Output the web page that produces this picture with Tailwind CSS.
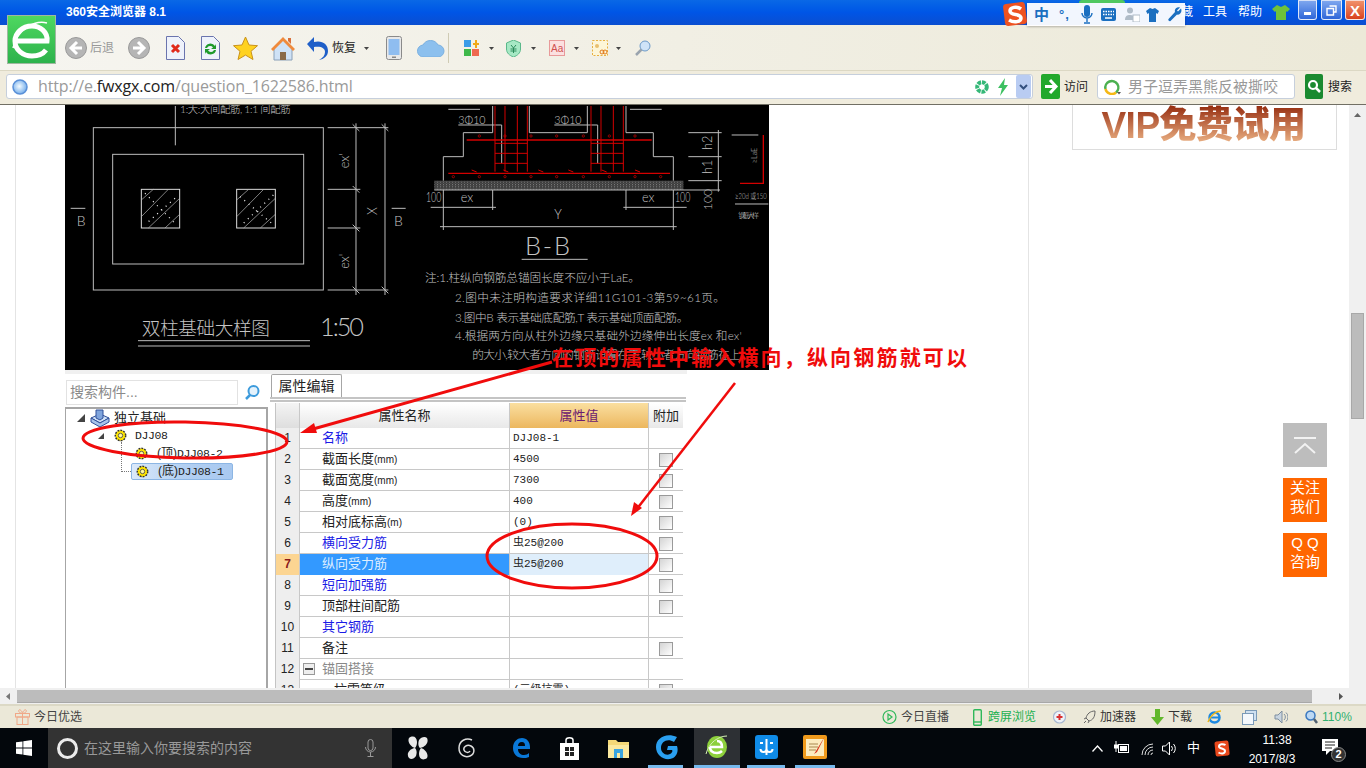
<!DOCTYPE html>
<html lang="zh">
<head>
<meta charset="UTF-8">
<title>360安全浏览器 8.1</title>
<script src="https://cdn.jsdelivr.net/npm/@tailwindcss/browser@4"></script>
</head>
<body class="bg-white">
<svg class="hidden">
  <symbol id="gear" viewBox="0 0 14 14"><circle cx="7" cy="7" r="5.6" fill="#ffe600" stroke="#333" stroke-width="1.6" stroke-dasharray="2 1.2"/><circle cx="7" cy="7" r="2.4" fill="#fff8a0" stroke="#555" stroke-width="1"/></symbol>
  <symbol id="caret" viewBox="0 0 5 3"><path d="M0 0h5L2.5 3z" fill="#444"/></symbol>
</svg>
<div class="relative w-[1366px] h-[768px] overflow-hidden flex flex-col text-[12px] text-[#222] [font-family:'Liberation_Sans','Noto_Sans_CJK_SC',sans-serif]">

  <!-- title bar -->
  <div class="h-[25px] flex-none flex items-start bg-linear-to-b from-[#0a68e6] via-[#0055e6] to-[#0a4ed0] text-white">
    <span class="ml-[66px] mt-[4px] font-bold leading-4 text-[12px]">360安全浏览器 8.1</span>
    <div class="ml-auto flex items-start">
      <span class="mt-[4px] leading-4">藏</span>
      <span class="ml-[10px] mt-[4px] leading-4">工具</span>
      <span class="ml-[11px] mt-[4px] leading-4">帮助</span>
      <svg class="ml-[10px] mt-[5px]" width="18" height="15" viewBox="0 0 18 15"><path d="M5 0l4 2 4-2 5 4-3 3-1-1v9H4V6L3 7 0 4z" fill="#6fc23a"/></svg>
      <div class="ml-[8px] w-[19px] h-[20px] rounded-b-[3px] border border-white/80 bg-linear-to-b from-[#7ea6ee] to-[#2f66d8] flex items-end justify-center pb-[4px]"><span class="w-[7px] h-[3px] bg-white"></span></div>
      <div class="ml-[4px] w-[21px] h-[20px] rounded-b-[3px] border border-white/80 bg-linear-to-b from-[#7ea6ee] to-[#2f66d8] flex items-center justify-center"><svg width="11" height="11" viewBox="0 0 11 11" fill="none" stroke="#fff" stroke-width="1.4"><path d="M3.5 1h6.500v6h-2M1 3.500h6.500v6.500H1z"/></svg></div>
      <div class="ml-[3px] mr-[1px] w-[20px] h-[20px] rounded-b-[3px] border border-white/80 bg-linear-to-b from-[#f0906a] to-[#d8401c] flex items-center justify-center text-white font-bold text-[15px] leading-none">X</div>
    </div>
  </div>

  <!-- toolbar -->
  <div class="h-[45px] flex-none flex items-center pl-[65px] pt-[1px] bg-linear-to-r from-[#f6f5f0] to-[#ece9d8]">
    <svg width="22" height="22" viewBox="0 0 22 22"><circle cx="11" cy="11" r="10.500" fill="#b5b5b5" stroke="#999"/><path d="M12 5l-6 6 6 6M6 11h11" fill="none" stroke="#fff" stroke-width="3"/></svg>
    <span class="ml-[3px] text-[#999]">后退</span>
    <svg class="ml-[14px]" width="22" height="22" viewBox="0 0 22 22"><circle cx="11" cy="11" r="10.500" fill="#b5b5b5" stroke="#999"/><path d="M10 5l6 6-6 6M16 11H5" fill="none" stroke="#fff" stroke-width="3"/></svg>
    <svg class="ml-[16px]" width="19" height="24" viewBox="0 0 19 24"><path d="M.5.500h12l6 6v17H.500z" fill="#eef2fb" stroke="#6a74ae"/><path d="M6 9l7 7M13 9l-7 7" stroke="#e02a1c" stroke-width="3"/></svg>
    <svg class="ml-[16px]" width="19" height="24" viewBox="0 0 19 24"><path d="M.5.500h12l6 6v17H.500z" fill="#eef2fb" stroke="#6a74ae"/><path d="M4 12a5.500 5.500 0 0 1 10-2l1-2v5h-5l2-1.500a3.500 3.500 0 0 0-6 .500zM15 14a5.500 5.500 0 0 1-10 2l-1 2v-5h5l-2 1.500a3.500 3.500 0 0 0 6-.500z" fill="#1f9a2c"/></svg>
    <svg class="ml-[13px]" width="25" height="24" viewBox="0 0 25 24"><path d="M12.500 1l3.500 8 8.500.700-6.500 5.600 2 8.200-7.500-4.400L5 23.500l2-8.200L.5 9.700 9 9z" fill="#ffd21f" stroke="#c9921a"/></svg>
    <svg class="ml-[13px]" width="24" height="25" viewBox="0 0 24 25"><path d="M3 12v12h18V12L12 4z" fill="#cfe2f6" stroke="#8aa0b8"/><path d="M0 13L12 1l12 12-2 2L12 5 2 15z" fill="#ef8a3c"/><path d="M9 16h6v8H9z" fill="#8a6a48"/><path d="M17 2h3v6l-3-3z" fill="#d8703a"/></svg>
    <svg class="ml-[12px]" width="22" height="24" viewBox="0 0 22 24"><path d="M7 1v5c8-2 14 2 14 9 0 5-4 8-9 9 4-2 6-5 6-8 0-4-4-6-11-5v5L0 8z" fill="#1f5fc8"/></svg>
    <span class="ml-[3px]">恢复</span>
    <svg class="ml-[8px]" width="5" height="3"><use href="#caret"/></svg>
    <svg class="ml-[17px]" width="16" height="24" viewBox="0 0 16 24"><rect x=".5" y=".5" width="15" height="23" rx="2" fill="#e8e8e8" stroke="#8a8a8a"/><rect x="2.500" y="3" width="11" height="16" fill="#8fbdf0"/><rect x="6" y="20.500" width="4" height="1.500" fill="#888"/></svg>
    <svg class="ml-[15px]" width="28" height="18" viewBox="0 0 28 18"><path d="M7 18a6 6 0 0 1-1-12A8.500 8.500 0 0 1 21 6a6 6 0 0 1 0 12z" fill="#8cc0ee" stroke="#7ab0e0"/></svg>
    <span class="ml-[3px] w-px h-[30px] bg-[#cfcbb4]"></span>
    <svg class="ml-[15px]" width="15" height="16" viewBox="0 0 15 16"><rect width="7" height="7" fill="#3a9ce8"/><path d="M9 3h2V0h2v3h2v2h-2v3h-2V5H9z" fill="#f0a818"/><rect y="9" width="7" height="7" fill="#3fb84a"/><rect x="8" y="9" width="7" height="7" fill="#ef6a50"/></svg>
    <svg class="ml-[10px]" width="5" height="3"><use href="#caret"/></svg>
    <svg class="ml-[12px]" width="15" height="17" viewBox="0 0 15 17"><path d="M7.500 0l7 3v6c0 4-3 6.500-7 8-4-1.500-7-4-7-8V3z" fill="#a6e8c4" stroke="#5ab88a"/><path d="M5 5l2.500 3L10 5M4.500 9h6M4.500 11h6M7.500 8v5" fill="none" stroke="#2a8a5a"/></svg>
    <svg class="ml-[10px]" width="5" height="3"><use href="#caret"/></svg>
    <svg class="ml-[13px]" width="16" height="16" viewBox="0 0 16 16"><rect x=".5" y=".5" width="15" height="15" fill="#fbe0e0" stroke="#e89a9a"/><text x="2" y="12" font-size="10" fill="#d05050">Aa</text></svg>
    <svg class="ml-[9px]" width="5" height="3"><use href="#caret"/></svg>
    <svg class="ml-[13px]" width="16" height="16" viewBox="0 0 16 16"><rect x=".5" y=".5" width="15" height="15" fill="#fdf6d8" stroke="#e8b040" stroke-dasharray="2 1.500"/><circle cx="5" cy="6" r="2" fill="#e8c070"/><circle cx="10" cy="12" r="2" fill="none" stroke="#e07818"/><circle cx="13" cy="12" r="2" fill="none" stroke="#e07818"/></svg>
    <svg class="ml-[8px]" width="5" height="3"><use href="#caret"/></svg>
    <svg class="ml-[14px]" width="16" height="17" viewBox="0 0 16 17"><circle cx="10" cy="6" r="5" fill="#cfe4f8" stroke="#6c9ac8"/><path d="M6.500 9.500L1 15" stroke="#9aa4ae" stroke-width="2.500"/></svg>
  </div>

  <!-- address bar -->
  <div class="h-[34px] flex-none flex items-start pl-[6px] pt-[4px] bg-[#f0ecdd] border-t border-[#dcd8c4]">
    <div class="w-[1027px] h-[25px] -mt-px flex items-center bg-white border border-[#c6cfdc] rounded-[3px]">
      <svg class="ml-[5px]" width="16" height="16" viewBox="0 0 16 16"><defs><radialGradient id="globe" cx=".45" cy=".45" r=".6"><stop offset="0" stop-color="#f4fbff"/><stop offset="1" stop-color="#6aa8ea"/></radialGradient></defs><circle cx="8" cy="8" r="7" fill="url(#globe)" stroke="#5a90d8" stroke-width="1.500"/></svg>
      <span class="ml-[10px] -mt-[2px] text-[16px] leading-5 text-[#9a9a9a] [font-family:'Open_Sans',sans-serif] tracking-[-0.15px] whitespace-nowrap">http://e.<span class="text-[#222]">fwxgx.com</span>/question_1622586.html</span>
      <svg class="ml-auto" width="14" height="14" viewBox="0 0 14 14"><circle cx="7" cy="7" r="4.800" fill="none" stroke="#35b878" stroke-width="4" stroke-dasharray="3.500 .9"/></svg>
      <svg class="ml-[8px]" width="12" height="18" viewBox="0 0 12 18"><path d="M8 0L1 10h4l-2 8 8-11H7z" fill="#3cc060"/></svg>
      <div class="ml-[7px] mr-px w-[15px] h-[23px] bg-[#b9ccf2] rounded-[2px] flex items-center justify-center"><svg width="9" height="6" viewBox="0 0 9 6" fill="none" stroke="#33507e" stroke-width="2"><path d="M1 1l3.500 3.500L8 1"/></svg></div>
    </div>
    <svg class="ml-[8px] -mt-[1px]" width="19" height="25" viewBox="0 0 19 25"><rect width="19" height="25" rx="2" fill="#22a82c"/><path d="M4 12.500h9M9 6l6 6.500-6 6.500" fill="none" stroke="#fff" stroke-width="3"/></svg>
    <span class="ml-[4px] mt-[4px] leading-4">访问</span>
    <div class="ml-[9px] w-[198px] h-[25px] -mt-px flex items-center bg-white border border-[#c6cfdc] rounded-[3px]">
      <svg class="ml-[5px]" width="18" height="16" viewBox="0 0 18 16"><path d="M13 13.500A6.500 6.500 0 1 0 2.500 10" fill="none" stroke="#4cb050" stroke-width="2.500"/><path d="M2.500 10A6.500 6.500 0 0 0 13 13.500" fill="none" stroke="#f5b816" stroke-width="2.500"/><path d="M14 13h4l-2 2.500z" fill="#555"/></svg>
      <span class="ml-[7px] text-[15px] leading-5 text-[#999] whitespace-nowrap">男子逗弄黑熊反被撕咬</span>
    </div>
    <svg class="ml-[10px] -mt-[1px]" width="18" height="25" viewBox="0 0 18 25"><rect width="18" height="25" rx="2" fill="#1a8a30"/><circle cx="8" cy="11" r="4" fill="none" stroke="#fff" stroke-width="2.200"/><path d="M11 14l4 4" stroke="#fff" stroke-width="2.500"/></svg>
    <span class="ml-[5px] mt-[4px] leading-4">搜索</span>
  </div>
  <div class="h-px flex-none bg-[#716f64]"></div>

  <!-- page -->
  <div class="h-[583px] flex-none flex overflow-hidden">
    <div class="w-[1349px] flex-none flex overflow-hidden">
      <div class="ml-[15px] w-[1014px] flex-none border-x border-[#e4e4e4] pl-[49px] overflow-hidden">
        <!-- pasted drawing -->
        <svg class="block" width="704" height="265" viewBox="65 105 704 265" font-family="Lato, Noto Sans CJK SC, sans-serif">
          <defs>
            <pattern id="speck" width="9" height="7" patternUnits="userSpaceOnUse"><rect width="9" height="7" fill="#3c3c3c"/><circle cx="2" cy="2" r="1.200" fill="#d4d4d4"/><circle cx="6" cy="5" r="1" fill="#a8a8a8"/></pattern>
          </defs>
          <rect x="65" y="105" width="704" height="265" fill="#000"/>
          <g transform="translate(60 100) scale(.33333)" fill="none" stroke="#bdbdbd" stroke-width="3">
            <path d="M346 18v118"/>
            <rect x="100" y="83" width="690" height="487"/>
            <rect x="158" y="163" width="573" height="329"/>
            <rect x="244" y="268" width="115" height="116" stroke="#ddd"/>
            <rect x="530" y="268" width="116" height="116" stroke="#ddd"/>
            <path stroke-width="2" d="M244 300l36-32M244 350l81-82M265 384l94-89M315 384l44-41M530 300l36-32M530 350l81-82M551 384l95-89M601 384l45-41"/>
            <path stroke-dasharray="3 14" stroke-width="4" stroke="#eee" d="M255 280l90 90M345 295l-80 70M540 290l95 80M640 285l-90 85"/>
            <path d="M803 83h182M803 268h98M803 384h98M803 570h182M888 70v515M975 70v515M878 73l20 20M965 73l20 20M878 258l20 20M878 374l20 20M878 560l20 20M965 560l20 20M32 325h44M995 325h42"/>
            <path d="M234 722h516M234 738h516"/>
            <g stroke="none" fill="#c4c4c4" font-weight="300">
              <text x="360" y="38" font-size="31" textLength="332">1:大:大间配筋, 1:1 间配筋</text>
              <text x="50" y="377" font-size="42">B</text>
              <text x="1002" y="377" font-size="42">B</text>
              <text transform="translate(868 205) rotate(-90)" font-size="38">ex'</text>
              <text transform="translate(868 506) rotate(-90)" font-size="38">ex'</text>
              <text transform="translate(952 345) rotate(-90)" font-size="38">X</text>
              <text x="245" y="706" font-size="56" textLength="385">双柱基础大样图</text>
              <text x="780" y="708" font-size="76" textLength="132">1:50</text>
            </g>
          </g>
          <g transform="translate(410 100) scale(.33333)" fill="none" stroke="#bdbdbd" stroke-width="3">
            <rect x="73" y="242" width="747" height="28" fill="url(#speck)" stroke="none"/>
            <path d="M73 270h857M100 242v-72h60V98h88V18M358 18v80h174V18M648 18v80h82v72h60v72M115 28h95M660 28h95M145 75h130v115M433 75h130v115"/>
            <path d="M62 322h196M100 270v60M248 270v60M640 322h190M648 270v60M790 270v60M90 380h710M100 330v60M790 330v60M925 90v185M835 98h100M835 170h100M835 242h100M965 105h80M975 312h100M335 478h198"/>
            <g stroke="#d40000">
              <path d="M255 18v197M285 18v197M322 18v197M352 18v197M543 18v197M573 18v197M610 18v197M640 18v197M255 130h97M255 160h97M255 190h97M543 130h97M543 160h97M543 190h97"/>
              <path stroke-width="4" d="M170 120h555M115 220h665M1060 105v145h-70"/>
              <path d="M185 210l15 6M280 210l15 6M385 210l15 6M475 210l15 6M575 210l15 6M675 210l15 6"/>
              <g stroke-width="2">
                <circle cx="208" cy="108" r="3.500"/><circle cx="285" cy="108" r="3.500"/><circle cx="363" cy="108" r="3.500"/><circle cx="440" cy="108" r="3.500"/><circle cx="520" cy="108" r="3.500"/><circle cx="598" cy="108" r="3.500"/><circle cx="675" cy="108" r="3.500"/>
                <circle cx="130" cy="230" r="3.500"/><circle cx="208" cy="230" r="3.500"/><circle cx="285" cy="230" r="3.500"/><circle cx="363" cy="230" r="3.500"/><circle cx="440" cy="230" r="3.500"/><circle cx="520" cy="230" r="3.500"/><circle cx="598" cy="230" r="3.500"/><circle cx="675" cy="230" r="3.500"/><circle cx="752" cy="230" r="3.500"/>
              </g>
            </g>
            <g stroke="none" fill="#c4c4c4" font-weight="300">
              <text x="145" y="72" font-size="32">3Φ10</text>
              <text x="433" y="72" font-size="32">3Φ10</text>
              <text x="48" y="305" font-size="38" textLength="46" lengthAdjust="spacingAndGlyphs">100</text>
              <text x="795" y="305" font-size="38" textLength="46" lengthAdjust="spacingAndGlyphs">100</text>
              <text x="152" y="305" font-size="38">ex</text>
              <text x="696" y="305" font-size="38">ex</text>
              <text x="433" y="358" font-size="38">Y</text>
              <text transform="translate(907 150) rotate(-90)" font-size="38">h2</text>
              <text transform="translate(907 222) rotate(-90)" font-size="38">h1</text>
              <text transform="translate(907 330) rotate(-90)" font-size="36">100</text>
              <text transform="translate(1040 190) rotate(-90)" font-size="22">≥LaE</text>
              <text x="975" y="296" font-size="24" textLength="95" lengthAdjust="spacingAndGlyphs">≥20d 或150</text>
              <text x="985" y="354" font-size="22" textLength="62">钢筋大样</text>
              <text x="345" y="466" font-size="76" textLength="135">B-B</text>
              <text x="45" y="545" font-size="35" textLength="645">注:1.柱纵向钢筋总锚固长度不应小于LaE。</text>
              <text x="135" y="605" font-size="35" textLength="810">2.图中未注明构造要求详细11G101-3第59~61页。</text>
              <text x="135" y="665" font-size="35" textLength="700">3.图中B 表示基础底配筋,T 表示基础顶面配筋。</text>
              <text x="135" y="720" font-size="35" textLength="860">4.根据两方向从柱外边缘只基础外边缘伸出长度ex 和ex'</text>
              <text x="187" y="778" font-size="35" textLength="805">的大小,较大者方向的钢筋设置在下,较小者方向钢筋在上</text>
            </g>
          </g>
        </svg>
        <!-- pasted software panel -->
        <div class="w-[622px] h-[318px] flex flex-col bg-white">
          <div class="h-[4px] flex-none bg-[#f0f0f0]"></div>
          <div class="flex flex-1 min-h-0">
            <div class="w-[202px] flex-none flex flex-col">
              <div class="h-[33px] flex-none flex items-start pt-[6px] pl-px">
                <div class="w-[172px] h-[25px] border border-[#e2e2e2] flex items-center pl-[3px] text-[14px] text-[#8a8a8a]">搜索构件...</div>
                <svg class="ml-[7px] mt-[5px]" width="15" height="15" viewBox="0 0 15 15"><circle cx="8.500" cy="6" r="5" fill="#e4f2fc" stroke="#3d9bdc" stroke-width="2"/><path d="M5 10l-4 4" stroke="#3d9bdc" stroke-width="2.500"/></svg>
              </div>
              <div class="relative flex-1 border-t-2 border-r-2 border-l border-[#a6a6a6] -mr-px pl-[11px] text-[12px]">
                <div class="flex items-center h-[18px]">
                  <svg width="8" height="8" viewBox="0 0 8 8"><path d="M8 0v8H0z" fill="#444"/></svg>
                  <svg class="ml-[5px]" width="20" height="20" viewBox="0 0 20 20"><path d="M1 10l9-4 9 4-9 5z" fill="#cfe0f6" stroke="#30509a"/><path d="M1 10v4l9 5 9-5v-4l-9 5z" fill="#a8c4ea" stroke="#30509a"/><path d="M6 2h7v8l-3 2-4-2z" fill="#7fa4dc" stroke="#30509a"/></svg>
                  <span class="ml-[4px] text-[13px] leading-4">独立基础</span>
                </div>
                <div class="flex items-center h-[17px] pl-[21px]">
                  <svg width="6" height="6" viewBox="0 0 8 8"><path d="M8 0v8H0z" fill="#444"/></svg>
                  <svg class="ml-[10px]" width="13" height="13"><use href="#gear"/></svg>
                  <span class="ml-[8px] leading-4 [font-family:'Liberation_Mono',monospace] text-[11.500px] -tracking-[0.4px]">DJJ08</span>
                </div>
                <div class="flex items-center h-[17px] mt-px pl-[58px]">
                  <svg width="13" height="13"><use href="#gear"/></svg>
                  <span class="ml-[9px] leading-4 whitespace-nowrap text-[12px]">(顶)<span class="[font-family:'Liberation_Mono',monospace] text-[11.500px] -tracking-[0.4px]">DJJ08-2</span></span>
                </div>
                <div class="flex items-center h-[17px] mt-px ml-[54px] w-[102px] pl-[4px] rounded-[2px] border border-[#8cb6e4] bg-linear-to-r from-[#dbe9fa] via-[#b3d0f2] to-[#a9c9f0]">
                  <svg width="13" height="13"><use href="#gear"/></svg>
                  <span class="ml-[9px] leading-4 whitespace-nowrap text-[12px]">(底)<span class="[font-family:'Liberation_Mono',monospace] text-[11.500px] -tracking-[0.4px]">DJJ08-1</span></span>
                </div>
                <span class="absolute left-[55px] top-[33px] w-[11px] h-[12px] border-l border-b border-dotted border-[#777]"></span>
                <span class="absolute left-[55px] top-[45px] w-[10px] h-[18px] border-l border-b border-dotted border-[#777]"></span>
              </div>
            </div>
            <div class="ml-[3px] w-[416px] flex-none flex flex-col">
              <div class="ml-[1px] w-[71px] h-[23px] flex-none flex items-center justify-center border border-b-0 border-[#a6a6a6] text-[14px] rounded-t-[2px]">属性编辑</div>
              <div class="h-[5px] flex-none border-t-2 border-b-2 border-[#c4c4c4] bg-white"></div>
              <div id="grid" class="ml-[5px] mt-px w-[408px] flex-1 overflow-hidden border-l border-[#c4c4c4]"></div>
            </div>
          </div>
        </div>
      </div>
      <!-- side column -->
      <div class="ml-[43px] w-[265px] h-[45px] flex-none border-x border-b border-[#dddddd] flex justify-center items-start">
        <span class="-mt-[2px] ml-[-2px] text-[37px] leading-[45px] font-black tracking-[-0.5px] whitespace-nowrap bg-linear-to-b from-[#8f2000] to-[#f4c293] bg-clip-text text-transparent">VIP免费试用</span>
      </div>
    </div>
    <!-- vertical scrollbar -->
    <div class="relative w-[17px] flex-none bg-[#f0f0f0]">
      <svg class="absolute left-[5px] top-[8px]" width="7" height="4" viewBox="0 0 7 4"><path d="M0 4l3.500-4L7 4z" fill="#666"/></svg>
      <div class="absolute left-[2px] top-[208px] w-[13px] h-[106px] bg-[#bcbcbc] border border-[#a8a8a8]"></div>
    </div>
  </div>

  <!-- horizontal scrollbar -->
  <div class="h-[16px] flex-none flex items-center bg-[#f0f0f0] pr-[17px]">
    <svg class="ml-[6px]" width="4" height="7" viewBox="0 0 4 7"><path d="M4 0v7L0 3.500z" fill="#777"/></svg>
    <div class="ml-[7px] w-[1295px] h-[13px] bg-[#bcbcbc] border-b border-[#a8a8a8]"></div>
    <svg class="ml-[27px]" width="4" height="7" viewBox="0 0 4 7"><path d="M0 0v7l4-3.500z" fill="#555"/></svg>
  </div>

  <!-- status bar -->
  <div class="h-[24px] flex-none flex items-center bg-[#ebe8d8] border-t-2 border-[#dcd9c6] text-[12px] leading-4">
    <svg class="ml-[15px]" width="15" height="16" viewBox="0 0 15 16" fill="none" stroke="#f0a888"><rect x=".5" y="4.500" width="14" height="3.500"/><rect x="2" y="8" width="11" height="7.500"/><path d="M7.500 4.500v11M7.500 4.500C4 4 3 2 4 1s3 1 3.500 3.500C8 2 10 0 11 1s0 3-3.500 3.500"/></svg>
    <span class="ml-[4px] text-[#444]">今日优选</span>
    <svg class="ml-[800px]" width="15" height="16" viewBox="0 0 15 16" fill="none" stroke="#2fb85a" stroke-width="1.200"><circle cx="7.500" cy="8" r="6.500"/><path d="M6 5l4 3-4 3z"/></svg>
    <span class="ml-[4px] text-[#444]">今日直播</span>
    <svg class="ml-[24px]" width="9" height="17" viewBox="0 0 9 17" fill="none" stroke="#2fb85a" stroke-width="1.400"><rect x=".7" y=".7" width="7.600" height="15.600" rx="1"/><path d="M1 13h7"/></svg>
    <span class="ml-[6px] text-[#20b050]">跨屏浏览</span>
    <svg class="ml-[17px]" width="13" height="16" viewBox="0 0 13 16"><circle cx="6.500" cy="8" r="6" fill="#eef2f8" stroke="#a8b8d0" stroke-width="1.200"/><path d="M5.500 5h2v2h2v2h-2v2h-2V9h-2V7h2z" fill="#d83030"/></svg>
    <svg class="ml-[17px]" width="13" height="14" viewBox="0 0 13 14" fill="none" stroke="#666"><path d="M12 1C7 1 4 4 3 8l3 3c4-1 6-4 6-10zM3 8l-2 1M6 11l-1 2M3 11l-2 2"/></svg>
    <span class="ml-[4px] text-[#333]">加速器</span>
    <svg class="ml-[15px]" width="13" height="16" viewBox="0 0 13 16"><path d="M4 0h5v8h4l-6.500 8L0 8h4z" fill="#62b82c"/></svg>
    <span class="ml-[4px] text-[#333]">下载</span>
    <svg class="ml-[15px]" width="15" height="15" viewBox="0 0 15 15"><circle cx="7.500" cy="7.500" r="5" fill="none" stroke="#1c88e0" stroke-width="2.500"/><path d="M3 7.500h10" stroke="#1c88e0" stroke-width="2"/><path d="M1 12C3 6 9 1 14 1" fill="none" stroke="#f0b818" stroke-width="1.500"/></svg>
    <svg class="ml-[20px]" width="15" height="15" viewBox="0 0 15 15"><rect x="3.500" y=".5" width="11" height="10" fill="#cfe0f0" stroke="#7a9ab8"/><rect x=".5" y="3.500" width="11" height="11" fill="#f4f8fc" stroke="#7a9ab8"/></svg>
    <svg class="ml-[17px]" width="14" height="14" viewBox="0 0 14 14"><path d="M1 5h3l4-4v12l-4-4H1z" fill="#c8d4e0" stroke="#7f8fa0"/><path d="M10 4a4 4 0 0 1 0 6M12 2.500a6 6 0 0 1 0 9" fill="none" stroke="#7f8fa0"/></svg>
    <svg class="ml-[17px]" width="13" height="14" viewBox="0 0 13 14"><circle cx="5.500" cy="5.500" r="4.500" fill="#bcd8f4" stroke="#3a78c0" stroke-width="1.500"/><path d="M9 9l3 4" stroke="#506070" stroke-width="2.500"/></svg>
    <span class="ml-[4px] text-[#30b070]">110%</span>
  </div>

  <!-- taskbar -->
  <div class="h-[40px] flex-none flex bg-[#03070c] text-white">
    <div class="w-[48px] flex-none flex items-center justify-center">
      <svg width="16" height="16" viewBox="0 0 16 16" fill="#fff"><path d="M0 2.300l6.500-.9v6.200H0zM7.300 1.300L16 0v7.600H7.300zM0 8.400h6.500v6.200L0 13.700zM7.300 8.400H16V16l-8.700-1.200z"/></svg>
    </div>
    <div class="w-[344px] flex-none flex items-center bg-[#333333]">
      <span class="ml-[9px] size-[21px] rounded-full border-[3px] border-white/90"></span>
      <span class="ml-[6px] text-[14px] leading-5 text-[#999]">在这里输入你要搜索的内容</span>
      <svg class="ml-[113px]" width="11" height="18" viewBox="0 0 11 18" fill="none" stroke="#999"><rect x="3" y=".5" width="5" height="11" rx="2.500"/><path d="M.5 8a5 5 0 0 0 10 0M5.500 13v4M2.500 17.500h6"/></svg>
    </div>
    <div class="ml-[15px] flex items-center">
      <svg width="22" height="24" viewBox="0 0 22 24" fill="#e8e8e8"><path d="M2 2c4-3 8-1 8 4 0 3-1 5-2 6-4-1-8-6-6-10zM20 2c2 4-1 9-7 10-2-2-2-5-1-8 2-3 6-4 8-2zM2 22c-3-4 0-9 6-10 2 2 2 5 1 8-2 3-5 4-7 2zM20 22c-4 3-8 1-8-4 0-3 1-5 2-6 4 1 8 6 6 10z"/></svg>
      <svg class="ml-[28px]" width="19" height="22" viewBox="0 0 19 22" fill="none" stroke="#ddd" stroke-width="1.500"><path d="M15 3C9 0 2 4 2 11s6 10 11 8 5-8 1-10-8 1-7 4 5 3 6 1"/></svg>
      <svg class="ml-[36px]" width="19" height="22" viewBox="0 0 19 22"><path d="M1 11C1 4 6 1 10 1c5 0 8 4 8 9v2H6c0 4 3 6 6 6 2 0 4-1 5-2v4c-2 1-4 1-6 1-6 0-10-4-10-10zm5-2h7c0-3-1-4-3-4-3 0-4 2-4 4z" fill="#0a78d8"/></svg>
      <svg class="ml-[29px]" width="19" height="23" viewBox="0 0 19 23"><path d="M0 6h19v17H0z" fill="#fff"/><path d="M6 6V3c0-3 7-3 7 0v3" fill="none" stroke="#fff" stroke-width="1.500"/><path d="M5 10h4v4H5zM10 10h4v4h-4zM5 15h4v4H5zM10 15h4v4h-4z" fill="#222"/></svg>
      <svg class="ml-[29px]" width="21" height="20" viewBox="0 0 21 20"><path d="M0 2h8l2 2h11v16H0z" fill="#f4d878"/><path d="M0 7h21v13H0z" fill="#fbe9a0"/><path d="M6 11h9v9H6z" fill="#3aa4e0"/><path d="M9 15h3v5H9z" fill="#fbe9a0"/></svg>
      <div class="ml-[19px] w-[35px] h-[40px] flex items-center justify-center border-b-[3px] border-[#76b9ed]">
        <svg width="24" height="26" viewBox="0 0 24 26"><path d="M23 3l-3 5C14 4 7 7 7 14c0 5 5 8 9 6 2-1 3-3 2-4h-5l1-4h9c2 6-1 12-7 13C9 26 2 21 2 13 2 4 12-2 23 3z" fill="#2a9ff0"/></svg>
      </div>
      <div class="ml-[11px] w-[46px] h-[40px] flex items-center justify-center bg-[#2d3034] border-b-[3px] border-[#76b9ed]">
        <svg width="24" height="26" viewBox="0 0 24 26"><ellipse cx="12" cy="13" rx="10" ry="11" fill="#8dd03c"/><path d="M5 13h12c0-4-2-6-5-6M5 13c0 4 3 6 7 6 2 0 4-1 5-2" fill="none" stroke="#fff" stroke-width="2.500"/><path d="M1 20C4 8 14 2 22 2" fill="none" stroke="#d8f0b8"/></svg>
      </div>
      <div class="ml-[7px] w-[38px] h-[40px] flex items-center justify-center border-b-[3px] border-[#76b9ed]">
        <svg width="23" height="24" viewBox="0 0 23 24"><rect width="23" height="24" rx="3" fill="#0f8be8"/><path d="M11.500 4v10a3 3 0 0 0 6 0M11.500 14a3 3 0 0 1-6 0M8 8H5M15 8h3M11.500 14v6" fill="none" stroke="#fff" stroke-width="2"/></svg>
      </div>
      <div class="ml-[10px] w-[40px] h-[40px] flex items-center justify-center border-b-[3px] border-[#76b9ed]">
        <svg width="24" height="24" viewBox="0 0 24 24"><rect width="24" height="24" rx="2" fill="#f09a1c"/><rect x="3" y="4" width="18" height="17" fill="#fcecc0"/><path d="M6 9h9M6 12h9M6 15h7" stroke="#a88850"/><path d="M22 1L13 16l-2 3 3-2z" fill="#d83018"/></svg>
      </div>
    </div>
    <svg class="ml-[257px] mt-[17px]" width="11" height="7" viewBox="0 0 11 7" fill="none" stroke="#fff" stroke-width="1.300"><path d="M.5 6.500l5-5.500 5 5.500"/></svg>
    <svg class="ml-[11px] mt-[13px]" width="15" height="14" viewBox="0 0 15 14"><rect x="4.500" y="3.500" width="10" height="8" fill="none" stroke="#fff"/><rect x="6" y="5" width="7" height="5" fill="#fff"/><path d="M2 0v4M0 4h4v3H0zM2 7v4" stroke="#fff" fill="#fff"/></svg>
    <svg class="ml-[12px] mt-[14px]" width="13" height="14" viewBox="0 0 13 14" fill="none" stroke="#ddd"><path d="M1 13a11 11 0 0 1 11-11M4 13a8 8 0 0 1 8-8M7 13a5 5 0 0 1 5-5M10 13a2 2 0 0 1 2-2"/></svg>
    <svg class="ml-[8px] mt-[13px]" width="14" height="15" viewBox="0 0 14 15" fill="none" stroke="#fff"><path d="M.5 5h3l4-4v13l-4-4h-3z"/><path d="M9.500 5a4 4 0 0 1 0 5M11.500 3a6.500 6.500 0 0 1 0 9"/></svg>
    <span class="ml-[11px] mt-[12px] text-[13px] leading-4">中</span>
    <svg class="ml-[14px] mt-[12px]" width="16" height="17" viewBox="0 0 16 17"><rect x="1" y="1" width="14" height="15" rx="2" transform="rotate(-6 8 8)" fill="#e8481c"/><path d="M11.500 5C9 3.500 5 4 5 6.500S11 8 11 11s-4 3-6.500 1.500" fill="none" stroke="#fff" stroke-width="2"/></svg>
    <div class="ml-[20px] w-[52px] flex flex-col items-center pt-[3px] text-[12px] leading-[19px] whitespace-nowrap -translate-x-[4px]"><span class="ml-[10px]">11:38</span><span>2017/8/3</span></div>
    <div class="relative ml-[20px] mt-[11px]">
      <svg width="16" height="17" viewBox="0 0 16 17"><path d="M0 0h16v12h-8l-4 4v-4H0z" fill="#fff"/><path d="M3 3h10M3 6h10M3 9h7" stroke="#222"/></svg>
      <span class="absolute left-[9px] top-[8px] size-[15px] rounded-full bg-[#333] border border-[#888] flex items-center justify-center text-[11px] font-bold leading-none">2</span>
    </div>
  </div>

  <!-- logo over title bar and toolbar -->
  <div class="absolute left-[7px] top-[15px] w-[49px] h-[49px] flex items-center justify-center bg-linear-to-b from-[#4ed860] to-[#2cb24c] border border-[#9fb8a0]">
    <svg width="42" height="40" viewBox="0 0 42 40" fill="none" stroke="#fff"><path d="M5 21h31c1-9-7-15-15-15-10 0-17 7-17 15 0 9 8 15 17 15 6 0 11-2 14-6" stroke-width="5"/><path d="M36 3C24 0 6 9 2 28" stroke-width="1.500"/></svg>
  </div>

  <!-- input method bar over window buttons -->
  <div class="absolute left-[1027px] top-[3px] w-[158px] h-[23px] flex items-center bg-white/95 shadow-[0_1px_2px_rgba(0,0,0,0.25)] text-[#1b6fc0]">
    <span class="ml-[7px] text-[15px] font-bold leading-4">中</span>
    <span class="ml-[10px] text-[13px] font-bold leading-4 tracking-[1px] whitespace-nowrap">°,</span>
    <svg class="ml-[11px]" width="12" height="19" viewBox="0 0 12 19"><rect x="3" y="0" width="6" height="12" rx="3" fill="#1b6fc0"/><path d="M1 8a5 5 0 0 0 10 0M6 13v4M3 18h6" fill="none" stroke="#1b6fc0" stroke-width="1.400"/></svg>
    <svg class="ml-[8px]" width="15" height="13" viewBox="0 0 15 13"><rect width="15" height="13" rx="2" fill="#1b6fc0"/><path d="M2 3.500h11M2 6.500h11" stroke="#fff" stroke-width="1.500" stroke-dasharray="1.500 1"/><path d="M4 10h7" stroke="#fff" stroke-width="1.500"/></svg>
    <svg class="ml-[9px]" width="15" height="15" viewBox="0 0 15 15"><circle cx="5" cy="3.500" r="3" fill="#b0bcc8"/><path d="M0 13c0-4 2-5 5-5s4 1 4 2v3z" fill="#b0bcc8"/><rect x="8" y="8" width="7" height="7" fill="#fff" stroke="#b0bcc8"/></svg>
    <svg class="ml-[6px]" width="13" height="14" viewBox="0 0 13 14"><path d="M4 0l2.500 1L9 0l4 3-1.500 3L10 5v9H3V5L1.500 6 0 3z" fill="#1b6fc0"/></svg>
    <svg class="ml-[9px]" width="14" height="15" viewBox="0 0 14 15"><path d="M13 1.500L10 4.500 9 3.500l3-3C9 -.5 6 2 7 5L.5 12a1.500 1.500 0 0 0 2 2L9 7.500c3 1 5.500-2.500 4-6z" fill="#1b6fc0"/></svg>
  </div>
  <div class="absolute left-[1079px] top-0 w-[46px] h-[3px] bg-[#4fc860] rounded-t-full"></div>
  <svg class="absolute left-[1003px] top-[1px]" width="25" height="27" viewBox="0 0 25 27"><rect x="1" y="2" width="22" height="22" rx="3" transform="rotate(-7 12 13)" fill="#ee5220"/><path d="M18 8c-4-3-11-2-11 2 0 5 11 2 11 7 0 4-7 5-12 2" fill="none" stroke="#fff" stroke-width="3.500"/></svg>

  <!-- floating page buttons -->
  <div class="absolute left-[1283px] top-[423px] w-[44px] h-[44px] flex flex-col items-center justify-center gap-[3px] bg-[#bdbdbd]">
    <span class="w-[22px] h-[2px] bg-white/80"></span>
    <svg width="22" height="12" viewBox="0 0 22 12" fill="none" stroke="#fff" stroke-opacity=".8" stroke-width="2"><path d="M1 11L11 2l10 9"/></svg>
  </div>
  <div class="absolute left-[1283px] top-[478px] w-[44px] h-[44px] flex items-center justify-center text-center pb-[6px] bg-[#ff6600] text-white text-[15px] leading-[19px]">关注<br>我们</div>
  <div class="absolute left-[1283px] top-[533px] w-[44px] h-[44px] flex items-center justify-center text-center pb-[6px] bg-[#ff6600] text-white text-[15px] leading-[19px]">Q Q<br>咨询</div>

  <!-- red annotations drawn over the screenshot -->
  <svg class="absolute left-0 top-0 pointer-events-none" width="1366" height="768" viewBox="0 0 1366 768" fill="none" stroke="#f00c0c">
    <ellipse cx="185" cy="440" rx="102" ry="18" stroke-width="3" transform="rotate(1 185 440)"/>
    <ellipse cx="572" cy="556" rx="85" ry="32" stroke-width="3"/>
    <path d="M552 362L306 431" stroke-width="3"/>
    <path d="M300 433l14-10 3 10z" fill="#f00c0c" stroke="none"/>
    <path d="M735 383L636 510" stroke-width="2.500"/>
    <path d="M631 516l3-14 8 6z" fill="#f00c0c" stroke="none"/>
    <text x="552" y="365" fill="#f00c0c" stroke="none" font-size="21" font-weight="700" textLength="415">在顶的属性中输入横向，纵向钢筋就可以</text>
  </svg>
</div>
<script>
  // [no, name, unit, value, blue, checkbox]
  var rows = [
    ['1', '名称', '', 'DJJ08-1', 1, 0],
    ['2', '截面长度', '(mm)', '4500', 0, 1],
    ['3', '截面宽度', '(mm)', '7300', 0, 1],
    ['4', '高度', '(mm)', '400', 0, 1],
    ['5', '相对底标高', '(m)', '(0)', 0, 1],
    ['6', '横向受力筋', '', '虫25@200', 1, 1],
    ['7', '纵向受力筋', '', '虫25@200', 1, 1],
    ['8', '短向加强筋', '', '', 1, 1],
    ['9', '顶部柱间配筋', '', '', 0, 1],
    ['10', '其它钢筋', '', '', 1, 0],
    ['11', '备注', '', '', 0, 1],
    ['12', '锚固搭接', '', '', 2, 0],
    ['13', '抗震等级', '', '(三级抗震)', 3, 1]
  ];
  var cols = 'grid grid-cols-[24px_210px_139px_35px] h-[21px] border-b border-[#c8c8c8] text-[13px] leading-[20px]';
  var html = '<div class="grid grid-cols-[24px_210px_139px_35px] h-[25px] border-b border-[#c8c8c8] text-[13px] leading-[25px] text-center">' +
    '<div class="bg-linear-to-b from-[#f4f4f4] to-[#dedede] border-r border-[#c8c8c8]"></div>' +
    '<div class="bg-linear-to-b from-white to-[#e8e8e8] border-r border-[#c8c8c8]">属性名称</div>' +
    '<div class="bg-linear-to-b from-[#fadf9f] to-[#ecb75e] border-r border-[#c8c8c8] text-[#6c1a70]">属性值</div>' +
    '<div class="bg-linear-to-b from-white to-[#e8e8e8] border-r border-[#c8c8c8]">附加</div></div>';
  rows.forEach(function (r) {
    var sel = r[0] === '7';
    var noCls = sel ? 'bg-[#fcd592] text-[#8b1a1a] font-bold' : 'bg-[#eeeeee]';
    var nameCls = sel ? 'bg-[#3399ff] text-[#dfefff]' : r[4] === 1 ? 'text-[#1a1ae6]' : r[4] === 2 ? 'text-[#888]' : '';
    var valCls = sel ? 'bg-[#dfeefb]' : '';
    var box = r[5] ? '<span class="size-[14px] border border-[#9a9a9a] bg-linear-to-br from-[#d4d4d4] to-white"></span>' : '';
    var tree = r[4] === 2 ? '<span class="absolute left-[3px] top-[4px] size-[12px] border border-[#999] bg-[#eee] flex items-center justify-center"><span class="w-[8px] h-[2px] bg-[#444]"></span></span>' : '';
    var indent = r[4] === 3 ? 'pl-[34px]' : 'pl-[22px]';
    html += '<div class="' + cols + '">' +
      '<div class="border-r border-[#c8c8c8] text-center text-[12px] ' + noCls + '">' + r[0] + '</div>' +
      '<div class="relative border-r border-[#c8c8c8] whitespace-nowrap ' + indent + ' ' + nameCls + '">' + tree + r[1] + '<span class="text-[10px]">' + r[2] + '</span></div>' +
      '<div class="border-r border-[#c8c8c8] pl-[3px] text-[11px] [font-family:Liberation_Mono,Noto_Sans_CJK_SC,monospace] ' + valCls + '">' + r[3] + '</div>' +
      '<div class="border-r border-[#c8c8c8] flex items-center justify-center">' + box + '</div></div>';
  });
  document.getElementById('grid').innerHTML = html;
</script>
</body>
</html>
